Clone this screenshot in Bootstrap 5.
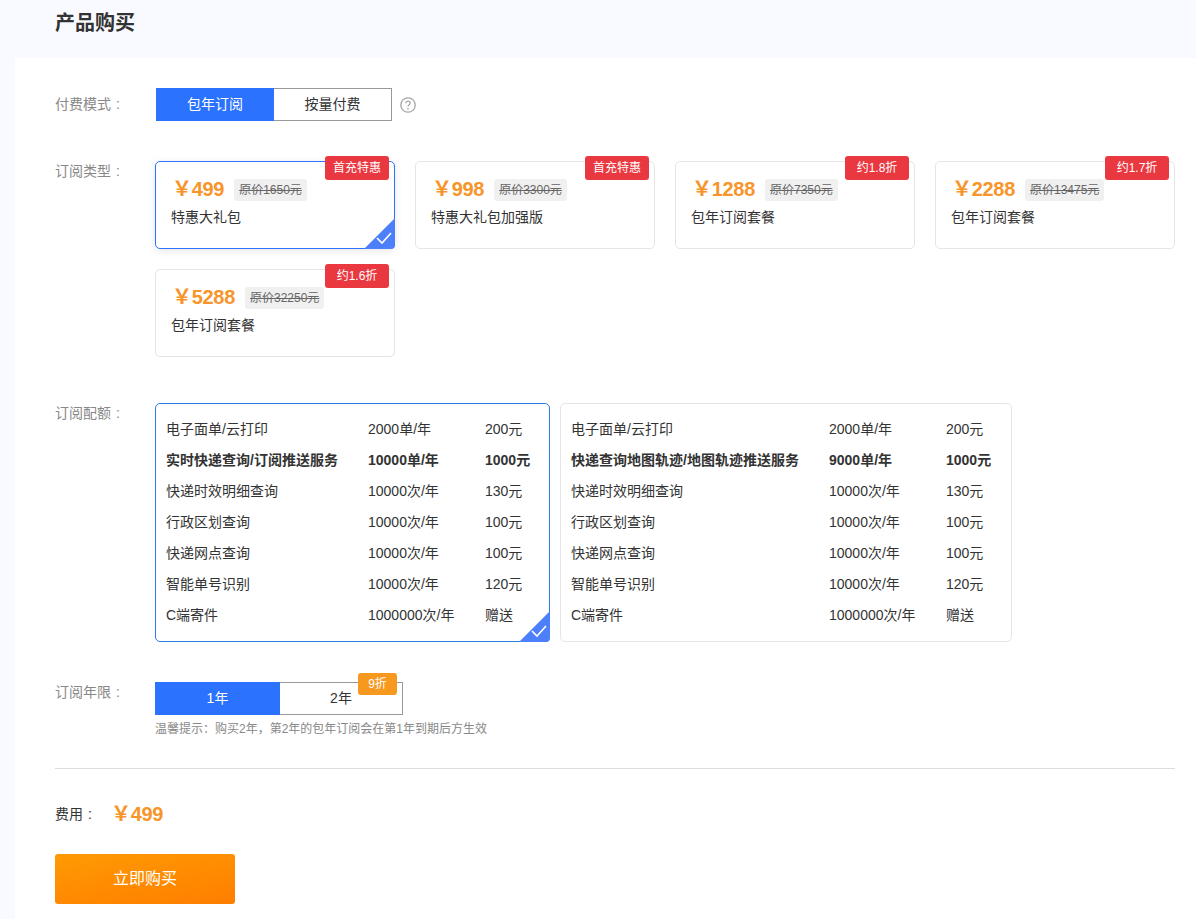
<!DOCTYPE html>
<html lang="zh">
<head>
<meta charset="utf-8">
<title>产品购买</title>
<link href="https://cdn.jsdelivr.net/npm/bootstrap@5.3.0/dist/css/bootstrap.min.css" rel="stylesheet">
<style>
html,body{height:919px;overflow:hidden}
body{background:#f9faff;color:#333;font-family:"Liberation Sans","Noto Sans CJK SC",sans-serif;font-size:14px;line-height:20px}
.page-head{height:58px;padding:8px 0 0 55px}
.page-title{font-size:20px;line-height:30px;font-weight:700;margin:0;color:#333}
.panel{background:#fff;margin-left:15px;height:861px;padding:30px 21px 0 40px}
.form-line{display:flex}
.line-label{width:100px;flex:none;color:#888;line-height:20px}
.colon{margin-left:5px}
.seg{display:inline-flex;height:33px;text-align:center;line-height:31px;color:#333;vertical-align:top}
.seg-item{border:1px solid #999;background:#fff;position:relative}
.seg-item.on{background:#2b72ff;border-color:#2b72ff;color:#fff}
.seg-item+.seg-item{border-left:0}
.pay-line{margin-bottom:40px;align-items:flex-start}
.pay-line .line-label{padding-top:6px}
.pay-seg{margin-left:1px}
.pay-seg .seg-item{width:118px}
.help{margin:9px 0 0 8px;display:block}
.plans{display:flex;flex-wrap:wrap;gap:20px;width:1020px}
.plan{width:240px;height:88px;border:1px solid #e5e5e5;border-radius:5px;position:relative;padding:12px 15px 0;background:#fff}
.plan.on{border-color:#2b72ff;box-shadow:0 2px 8px rgba(0,0,0,.1)}
.quota.on{border-color:#2a7de1}
.price-line{display:flex;align-items:center;height:30px;padding-left:1px}
.price{font-size:20px;font-weight:700;color:#f7952a;line-height:30px;letter-spacing:-.3px}
.old{margin-left:10px;background:#f0f0f0;border-radius:3px;color:#666;font-size:12px;line-height:22px;height:22px;padding:0 5px;text-decoration:line-through;margin-top:2px}
.plan-name{margin-top:3px;line-height:20px;color:#333;font-size:14px}
.tag{position:absolute;top:-6px;right:5px;height:24px;background:#ea3840;color:#fff;font-size:12px;line-height:24px;border-radius:3px;padding:0 8px}
.tag-w{width:64px;padding:0;text-align:center}
.corner{position:absolute;right:-1px;bottom:-1px;display:block}
.type-line{margin-bottom:46px}
.quotas{display:flex;gap:10px}
.quota{border:1px solid #e5e5e5;border-radius:5px;position:relative;height:239px;padding:10px 10px 0;background:#fff}
.q-a{width:395px}
.q-b{width:452px}
.q-row{display:flex;height:31px;line-height:31px;white-space:nowrap;color:#333;font-size:14px}
.q-row.fw{font-weight:700}
.q-a .c1{width:202px}
.q-b .c1{width:258px}
.c2{width:117px}
.quota-line{margin-bottom:40px}
.year-seg{position:relative}
.year-seg .y1{width:125px}
.year-seg .y2{width:123px}
.disc{position:absolute;top:-9px;right:6px;width:39px;height:22px;background:#f7981f;color:#fff;font-size:12px;line-height:22px;border-radius:3px;text-align:center}
.hint{font-size:12px;line-height:18px;color:#888;margin-top:5px}
.rule{height:1px;background:#ddd;margin:30px 0 0;width:1120px}
.fee{display:flex;align-items:center;height:30px;margin-top:30px;color:#333}
.fee .lbl{width:56px}
.buy{display:block;width:180px;height:50px;margin-top:25px;border:0;border-radius:3px;color:#fff;font-size:16px;background:linear-gradient(170deg,#ff9a03,#ff7e00)}
</style>
</head>
<body>
<div class="page-head"><h1 class="page-title">产品购买</h1></div>
<div class="panel">
  <div class="form-line pay-line">
    <div class="line-label">付费模式<span class="colon">:</span></div>
    <div class="seg pay-seg"><div class="seg-item on">包年订阅</div><div class="seg-item">按量付费</div></div>
    <svg class="help" width="16" height="16" viewBox="0 0 16 16" fill="none" stroke="#a6a6a6"><circle cx="8" cy="8" r="7.2" stroke-width="1.3"/><path d="M5.8 6.3c0-1.3 1-2.1 2.2-2.1s2.2.8 2.2 2c0 1.6-2.2 1.6-2.2 3.3" stroke-width="1.3"/><path d="M8 11v1.4" stroke-width="1.4"/></svg>
  </div>
  <div class="form-line type-line">
    <div class="line-label">订阅类型<span class="colon">:</span></div>
    <div class="plans">
      <div class="plan on">
        <div class="price-line"><span class="price">￥499</span><span class="old">原价1650元</span></div>
        <div class="plan-name">特惠大礼包</div>
        <div class="tag">首充特惠</div>
        <svg class="corner" width="31" height="31" viewBox="0 0 31 31"><path d="M31 0V27a4 4 0 0 1-4 4H0Z" fill="#4d7ffb"/><path d="M13 20l5 5 9-10" fill="none" stroke="#fff" stroke-width="1.6"/></svg>
      </div>
      <div class="plan">
        <div class="price-line"><span class="price">￥998</span><span class="old">原价3300元</span></div>
        <div class="plan-name">特惠大礼包加强版</div>
        <div class="tag">首充特惠</div>
      </div>
      <div class="plan">
        <div class="price-line"><span class="price">￥1288</span><span class="old">原价7350元</span></div>
        <div class="plan-name">包年订阅套餐</div>
        <div class="tag tag-w">约1.8折</div>
      </div>
      <div class="plan">
        <div class="price-line"><span class="price">￥2288</span><span class="old">原价13475元</span></div>
        <div class="plan-name">包年订阅套餐</div>
        <div class="tag tag-w">约1.7折</div>
      </div>
      <div class="plan">
        <div class="price-line"><span class="price">￥5288</span><span class="old">原价32250元</span></div>
        <div class="plan-name">包年订阅套餐</div>
        <div class="tag tag-w">约1.6折</div>
      </div>
    </div>
  </div>
  <div class="form-line quota-line">
    <div class="line-label">订阅配额<span class="colon">:</span></div>
    <div class="quotas">
      <div class="quota q-a on">
        <div class="q-row"><div class="c1">电子面单/云打印</div><div class="c2">2000单/年</div><div>200元</div></div>
        <div class="q-row fw"><div class="c1">实时快递查询/订阅推送服务</div><div class="c2">10000单/年</div><div>1000元</div></div>
        <div class="q-row"><div class="c1">快递时效明细查询</div><div class="c2">10000次/年</div><div>130元</div></div>
        <div class="q-row"><div class="c1">行政区划查询</div><div class="c2">10000次/年</div><div>100元</div></div>
        <div class="q-row"><div class="c1">快递网点查询</div><div class="c2">10000次/年</div><div>100元</div></div>
        <div class="q-row"><div class="c1">智能单号识别</div><div class="c2">10000次/年</div><div>120元</div></div>
        <div class="q-row"><div class="c1">C端寄件</div><div class="c2">1000000次/年</div><div>赠送</div></div>
        <svg class="corner" width="31" height="31" viewBox="0 0 31 31"><path d="M31 0V27a4 4 0 0 1-4 4H0Z" fill="#4d7ffb"/><path d="M13 20l5 5 9-10" fill="none" stroke="#fff" stroke-width="1.6"/></svg>
      </div>
      <div class="quota q-b">
        <div class="q-row"><div class="c1">电子面单/云打印</div><div class="c2">2000单/年</div><div>200元</div></div>
        <div class="q-row fw"><div class="c1">快递查询地图轨迹/地图轨迹推送服务</div><div class="c2">9000单/年</div><div>1000元</div></div>
        <div class="q-row"><div class="c1">快递时效明细查询</div><div class="c2">10000次/年</div><div>130元</div></div>
        <div class="q-row"><div class="c1">行政区划查询</div><div class="c2">10000次/年</div><div>100元</div></div>
        <div class="q-row"><div class="c1">快递网点查询</div><div class="c2">10000次/年</div><div>100元</div></div>
        <div class="q-row"><div class="c1">智能单号识别</div><div class="c2">10000次/年</div><div>120元</div></div>
        <div class="q-row"><div class="c1">C端寄件</div><div class="c2">1000000次/年</div><div>赠送</div></div>
      </div>
    </div>
  </div>
  <div class="form-line">
    <div class="line-label">订阅年限<span class="colon">:</span></div>
    <div>
      <div class="seg year-seg"><div class="seg-item on y1">1年</div><div class="seg-item y2">2年</div><div class="disc">9折</div></div>
      <div class="hint">温馨提示：购买2年，第2年的包年订阅会在第1年到期后方生效</div>
    </div>
  </div>
  <div class="rule"></div>
  <div class="fee"><span class="lbl">费用<span class="colon">:</span></span><span class="price">￥499</span></div>
  <button class="buy" type="button">立即购买</button>
</div>
<script src="https://cdn.jsdelivr.net/npm/bootstrap@5.3.0/dist/js/bootstrap.bundle.min.js"></script>
</body>
</html>
